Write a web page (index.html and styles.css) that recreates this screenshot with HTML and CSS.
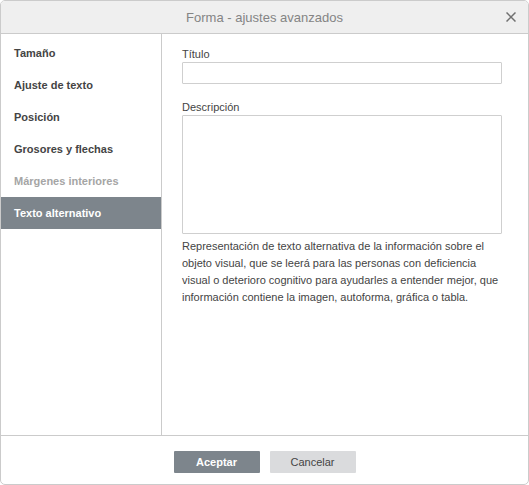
FILE: index.html
```html
<!DOCTYPE html>
<html lang="es">
<head>
<meta charset="utf-8">
<title>Forma - ajustes avanzados</title>
<link rel="stylesheet" href="styles.css">
</head>
<body>
<div class="dialog">
  <div class="header">
    <span class="title">Forma - ajustes avanzados</span>
    <span class="close" aria-label="Cerrar">
      <svg width="10" height="10" viewBox="0 0 10 10"><path d="M0.5 0.5 L9.5 9.5 M9.5 0.5 L0.5 9.5" stroke="#707070" stroke-width="1.5" fill="none"/></svg>
    </span>
  </div>
  <div class="main">
    <ul class="sidebar">
      <li class="item">Tamaño</li>
      <li class="item">Ajuste de texto</li>
      <li class="item">Posición</li>
      <li class="item">Grosores y flechas</li>
      <li class="item disabled">Márgenes interiores</li>
      <li class="item active">Texto alternativo</li>
    </ul>
    <div class="content">
      <label class="label">Título</label>
      <div class="input"></div>
      <label class="label label-desc">Descripción</label>
      <div class="textarea"></div>
      <p class="note">Representación de texto alternativa de la información sobre el objeto visual, que se leerá para las personas con deficiencia visual o deterioro cognitivo para ayudarles a entender mejor, que información contiene la imagen, autoforma, gráfica o tabla.</p>
    </div>
  </div>
  <div class="footer">
    <button class="btn primary">Aceptar</button>
    <button class="btn secondary">Cancelar</button>
  </div>
</div>
</body>
</html>
```
FILE: styles.css
```css
* { box-sizing: border-box; }
html, body { margin: 0; padding: 0; background: #ffffff; }
body {
  font-family: Arial, "Liberation Sans", sans-serif;
  font-size: 11px;
  color: #444444;
}
.dialog {
  width: 529px;
  height: 485px;
  border: 1px solid #cbcbcb;
  border-radius: 5px;
  display: flex;
  flex-direction: column;
  overflow: hidden;
  background: #ffffff;
}
.header {
  height: 33px;
  flex: none;
  background: #efefef;
  border-bottom: 1px solid #cbcbcb;
  display: flex;
  align-items: center;
  justify-content: center;
  position: relative;
}
.title {
  font-size: 13px;
  color: #848484;
  padding-top: 1px;
}
.close {
  position: absolute;
  right: 12px;
  top: 11px;
  width: 10px;
  height: 10px;
  display: block;
}
.close svg { display: block; }
.main {
  flex: 1;
  display: flex;
  min-height: 0;
}
.sidebar {
  list-style: none;
  margin: 0;
  padding: 3px 0 0 0;
  width: 161px;
  flex: none;
  border-right: 1px solid #cbcbcb;
}
.item {
  height: 32px;
  line-height: 32px;
  padding-left: 13px;
  font-weight: bold;
  color: #444444;
}
.item.disabled { color: #a5a5a5; }
.item.active { background: #7d858c; color: #ffffff; }
.content {
  flex: 1;
  padding: 12px 26px 0 20px;
  display: flex;
  flex-direction: column;
}
.label {
  display: block;
  height: 16px;
  line-height: 16px;
  color: #444444;
}
.label-desc { margin-top: 15px; }
.input {
  height: 22px;
  border: 1px solid #cfcfcf;
  border-radius: 1px;
}
.textarea {
  height: 119px;
  border: 1px solid #cfcfcf;
  border-radius: 1px;
}
.note {
  margin: 4px 0 0 0;
  line-height: 17px;
  color: #444444;
}
.footer {
  height: 49px;
  flex: none;
  border-top: 1px solid #cbcbcb;
  display: flex;
  justify-content: center;
  align-items: flex-start;
  gap: 10px;
  padding-top: 15px;
}
.btn {
  width: 86px;
  height: 22px;
  border: none;
  border-radius: 1px;
  font-family: Arial, "Liberation Sans", sans-serif;
  font-size: 11px;
  padding: 0;
}
.btn.primary { background: #7d858c; color: #ffffff; font-weight: bold; }
.btn.secondary { background: #dadbdd; color: #444444; }
```
